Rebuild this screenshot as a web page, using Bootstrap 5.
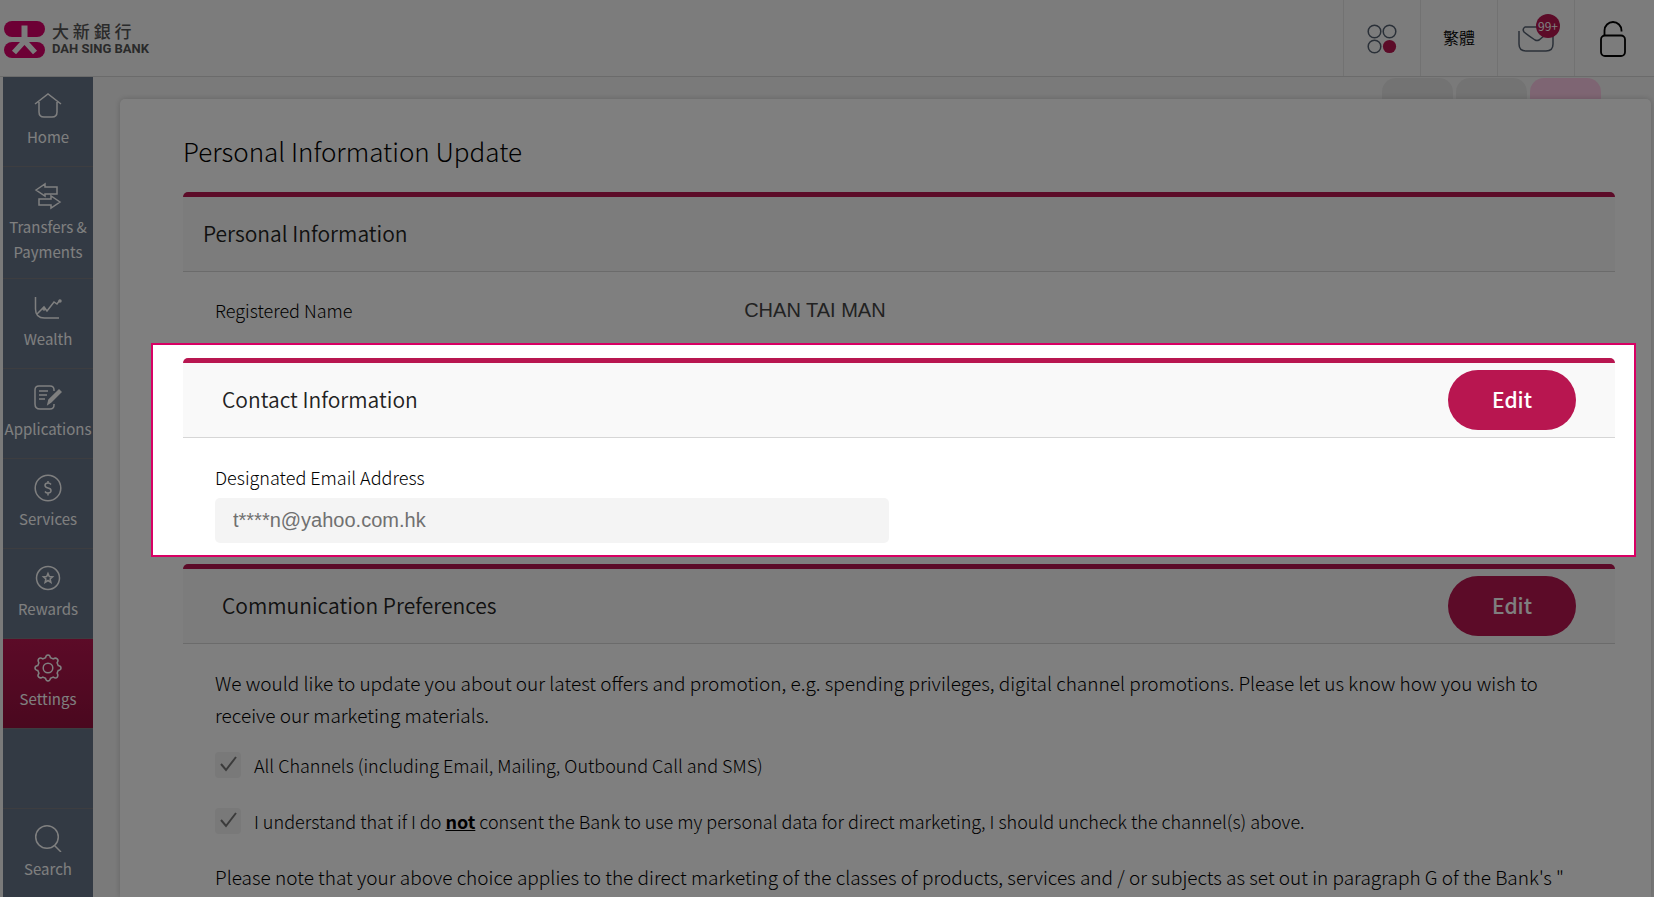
<!DOCTYPE html>
<html lang="en">
<head>
<meta charset="utf-8">
<meta name="viewport" content="width=device-width, initial-scale=1">
<title>Personal Information Update - Dah Sing Bank</title>
<link href="https://cdn.jsdelivr.net/npm/bootstrap@5.3.0/dist/css/bootstrap.min.css" rel="stylesheet">
<style>
:root { --brand: #b81650; --line: #d6d6d6; }
body { font-family: "Noto Sans CJK TC", "Noto Sans", sans-serif; background: #f5f5f5; color: #222; }
a { color: inherit; text-decoration: none; }
svg { display: block; fill: none; }
.scrim { position: fixed; inset: 0; background: rgba(0,0,0,.5); z-index: 1040; pointer-events: none; }

.topbar { height: 77px; background: #f9f9f9; border-bottom: 1px solid var(--line); }
.brand { gap: 7px; padding: 2px 0 0 4px; }
.brand-zh { font-size: 17px; line-height: 20px; font-weight: 500; color: #555; }
.brand-en { font: 700 13px/16px Roboto, sans-serif; color: #555; }
.tool { width: 77px; border: 0; border-left: 1px solid #e4e4e4; background: none; color: #000; padding: 2px 0 0; }
.tool:last-child { width: 80px; padding-right: 3px; }
.lang { font-size: 16px; line-height: 24px; font-weight: 350; padding: 0 0 2px; }
.count { position: absolute; left: 18px; top: -12px; width: 24px; height: 24px; border-radius: 50%; background: var(--brand); color: #fff; font-size: 12px; line-height: 23px; }

.sidebar { width: 90px; margin-left: 3px; background: #667489; flex: none; }
.side-link { min-height: 90px; padding: 15px 0 14px; color: #fff; font-size: 15px; line-height: 25px; text-align: center; border-bottom: 1px solid #7b7b80; }
.side-link svg { width: 28px; height: 28px; margin: 0 auto 4px; stroke: #fff; stroke-width: 1.5; }
.side-link.active { background: linear-gradient(#b81650, #94103e); }
.side-link.last { min-height: 89px; border-top: 1px solid #7b7b80; border-bottom: 0; }

.tabs { height: 22px; padding-top: 1px; gap: 3px; padding-right: 53px; }
.tab-top { width: 71px; background: #e6e6e6; border-radius: 14px 14px 0 0; }
.tab-top.on { background: #fdcbe6; }
.sheet { background: #fff; border-radius: 5px 5px 0 0; box-shadow: 0 0 6px rgba(0,0,0,.18); margin: 0 3px 0 27px; padding: 34px 36px 0 63px; }
.page-title { font-size: 26px; line-height: 36px; font-weight: 300; color: #000; margin: 0 0 23px; }
.sec-head { height: 80px; border-top: 5px solid var(--brand); border-bottom: 1px solid var(--line); border-radius: 5px 5px 0 0; background: #f9f9f9; padding: 0 39px; }
.sec-head.flush { padding-left: 20px; }
.sec-head h2 { font-size: 21px; line-height: 32px; font-weight: 350; margin: 0; padding-bottom: 3px; }
.edit { width: 128px; height: 60px; border: 0; border-radius: 30px; background: var(--brand); color: #fff; font-size: 21px; line-height: 32px; font-weight: 500; padding: 0 0 2px; }
.sec-body { padding: 0 33px 0 32px; }
.field { font-size: 18px; line-height: 24px; font-weight: 300; color: #000; }
.field b { font-weight: 700; }
.value-font { font-family: "Liberation Sans", Arial, sans-serif; font-size: 20px; line-height: 24px; }
.pair { display: grid; grid-template-columns: 12fr 19fr; padding-top: 26px; padding-bottom: 21px; }
.pair .value-font { color: #444; }
.spot { position: relative; z-index: 1050; background: #fff; border: 2px solid #d80064; margin: 0 -21px 7px -32px; padding: 13px 19px 12px 30px; }
.spot .row { --bs-gutter-x: 20px; }
.spot .field { padding: 27px 0 9px; }
.mail-box { height: 45px; border: 0; border-radius: 5px; background: #f4f4f4; color: #707070; padding: 0 18px; }
.prefs { padding-top: 23px; }
.copy { font-size: 19px; line-height: 32px; font-weight: 300; color: #000; margin: 0; }
.options { gap: 30px; padding: 21px 0 27px; }
.options .field { padding-left: 13px; }
.tick { appearance: none; width: 26px; height: 26px; margin: 0; border-radius: 4px; flex: none;
  background: #f2f2f2 url("data:image/svg+xml,%3Csvg xmlns='http://www.w3.org/2000/svg' viewBox='0 0 26 26'%3E%3Cpath d='M6 12l5 6L21 5' fill='none' stroke='%23777' stroke-width='2'/%3E%3C/svg%3E"); }
</style>
</head>
<body>
<div class="d-flex flex-column min-vh-100">
  <header class="topbar d-flex justify-content-between">
    <a href="#" class="brand d-flex align-items-center">
      <svg width="41" height="37" viewBox="0 0 41 37"><rect width="41" height="16" rx="8" fill="#da006a"/><rect y="21" width="41" height="16" rx="8" fill="#da006a"/><path d="M20.500 4.500V20" stroke="#f9f9f9" stroke-width="6"/><path d="M20.500 20L10 31.500M20.500 20L31 31.500" stroke="#f9f9f9" stroke-width="5.500"/><path d="M0 17.500h41v2H0z" fill="#f9f9f9"/></svg>
      <span class="d-flex flex-column">
        <span class="brand-zh">大 新 銀 行</span>
        <span class="brand-en">DAH SING BANK</span>
      </span>
    </a>
    <div class="d-flex">
      <button class="tool d-flex align-items-center justify-content-center" aria-label="Apps">
        <svg width="30" height="30" viewBox="0 0 30 30" stroke="#556070" stroke-width="1.500"><circle cx="7.500" cy="7.500" r="6.300"/><circle cx="22.500" cy="7.500" r="6.300"/><circle cx="7.500" cy="22.500" r="6.300"/><circle cx="22.500" cy="22.500" r="6.600" fill="#b81650" stroke="none"/></svg>
      </button>
      <button class="tool lang">繁體</button>
      <button class="tool d-flex align-items-center justify-content-center" aria-label="Messages">
        <span class="position-relative">
          <svg width="36" height="26" viewBox="0 0 36 26" stroke="#556070" stroke-width="1.500"><path d="M1 5v13q0 7 7 7h20q7 0 7-7V7"/><path d="M29 1H7Q4 3 6 6q5 4 11 8 2 1 4 0l6-5"/></svg>
          <span class="count">99+</span>
        </span>
      </button>
      <button class="tool d-flex align-items-center justify-content-center" aria-label="Log out">
        <svg width="26" height="36" viewBox="0 0 26 36" stroke="#000" stroke-width="1.800"><rect x="1" y="14.500" width="24" height="20.500" rx="4"/><path d="M4.500 14.500V9.500a8.500 8.500 0 0 1 17 0v1"/></svg>
      </button>
    </div>
  </header>

  <div class="d-flex flex-grow-1">
    <nav class="sidebar d-flex flex-column">
      <a href="#" class="side-link"><svg viewBox="0 0 28 28"><path d="M1 12L14 2l13 10M5 10v10q0 5 5 5h8q5 0 5-5V10"/></svg>Home</a>
      <a href="#" class="side-link"><svg viewBox="0 0 28 28"><path d="M2 8l9-6v3h12v7H11v2zM26 20l-9-6v3H5v6h12v3z"/></svg>Transfers &amp; Payments</a>
      <a href="#" class="side-link"><svg viewBox="0 0 28 28"><path d="M1.500 3v12q0 9 9 9H25M3 20l7-7 3 4 7-9 3 2 3-4"/><circle cx="26" cy="7" r="1" fill="#fff"/><circle cx="10" cy="15" r="1"/></svg>Wealth</a>
      <a href="#" class="side-link"><svg viewBox="0 0 28 28"><path d="M20 7V6q0-4-4-4H5Q1 2 1 6v14q0 5 5 5h10q4 0 4-4v-1M5 7h9M5 11h8M5 15h6"/><path d="M14 20l1-4L25 6l2 2-10 10z" fill="#fff"/></svg>Applications</a>
      <a href="#" class="side-link"><svg viewBox="0 0 28 28"><circle cx="14" cy="14" r="12.800"/><path d="M17 10.500q-1-1.500-3-1.500-3 0-3 2.300T14 14t3 2.700-3 2.300q-2 0-3-1.500M14 7v2M14 19v2.500"/></svg>Services</a>
      <a href="#" class="side-link"><svg viewBox="0 0 28 28"><circle cx="14" cy="14" r="11.500"/><path d="M14 9.500l1.300 3 3.300.3-2.500 2.200.8 3.300-2.900-1.800-2.900 1.800.8-3.300-2.500-2.200 3.300-.3z"/></svg>Rewards</a>
      <a href="#" class="side-link active"><svg viewBox="0 0 28 28"><circle cx="14" cy="14" r="4.800"/><path d="M11.500 3.800Q12 1 14 1t2.500 2.800l2.700 1.100Q21.500 3.400 23.200 4.800T23.100 8.800l1.100 2.700Q27 12 27 14t-2.800 2.500l-1.100 2.700q1.500 2.300.1 4t-4-.1l-2.700 1.100Q16 27 14 27t-2.500-2.800l-2.700-1.100q-2.300 1.500-4 .1t.1-4l-1.100-2.700Q1 16 1 14t2.800-2.500l1.100-2.700q-1.500-2.300-.1-4t4 .1z"/></svg>Settings</a>
      <a href="#" class="side-link last mt-auto"><svg viewBox="0 0 28 28"><circle cx="13" cy="13" r="11.300"/><path d="M20.500 21.500L27 28"/></svg>Search</a>
    </nav>

    <main class="flex-grow-1 d-flex flex-column">
      <div class="tabs d-flex justify-content-end">
        <span class="tab-top"></span><span class="tab-top"></span><span class="tab-top on"></span>
      </div>
      <div class="sheet flex-grow-1">
        <h1 class="page-title">Personal Information Update</h1>

        <section>
          <div class="sec-head flush d-flex align-items-center"><h2>Personal Information</h2></div>
          <div class="sec-body pair">
            <span class="field">Registered Name</span>
            <span class="value-font">CHAN TAI MAN</span>
          </div>
        </section>

        <section class="spot">
          <div class="sec-head d-flex align-items-center justify-content-between">
            <h2>Contact Information</h2>
            <button class="edit">Edit</button>
          </div>
          <div class="sec-body">
            <div class="row"><div class="col-6">
              <label for="email" class="field d-block">Designated Email Address</label>
              <input id="email" type="text" class="mail-box value-font w-100 d-block" value="t****n@yahoo.com.hk" readonly>
            </div></div>
          </div>
        </section>

        <section>
          <div class="sec-head d-flex align-items-center justify-content-between">
            <h2>Communication Preferences</h2>
            <button class="edit">Edit</button>
          </div>
          <div class="sec-body prefs">
            <p class="copy">We would like to update you about our latest offers and promotion, e.g. spending privileges, digital channel promotions. Please let us know how you wish to receive our marketing materials.</p>
            <div class="options d-flex flex-column">
              <div class="d-flex align-items-center"><input class="tick" type="checkbox" id="all" checked><label for="all" class="field">All Channels (including Email, Mailing, Outbound Call and SMS)</label></div>
              <div class="d-flex align-items-center"><input class="tick" type="checkbox" id="consent" checked><label for="consent" class="field">I understand that if I do <b><u>not</u></b> consent the Bank to use my personal data for direct marketing, I should uncheck the channel(s) above.</label></div>
            </div>
            <p class="copy">Please note that your above choice applies to the direct marketing of the classes of products, services and / or subjects as set out in paragraph G of the Bank's "</p>
          </div>
        </section>
      </div>
    </main>
  </div>
</div>
<div class="scrim"></div>
<script src="https://cdn.jsdelivr.net/npm/bootstrap@5.3.0/dist/js/bootstrap.bundle.min.js"></script>
</body>
</html>
